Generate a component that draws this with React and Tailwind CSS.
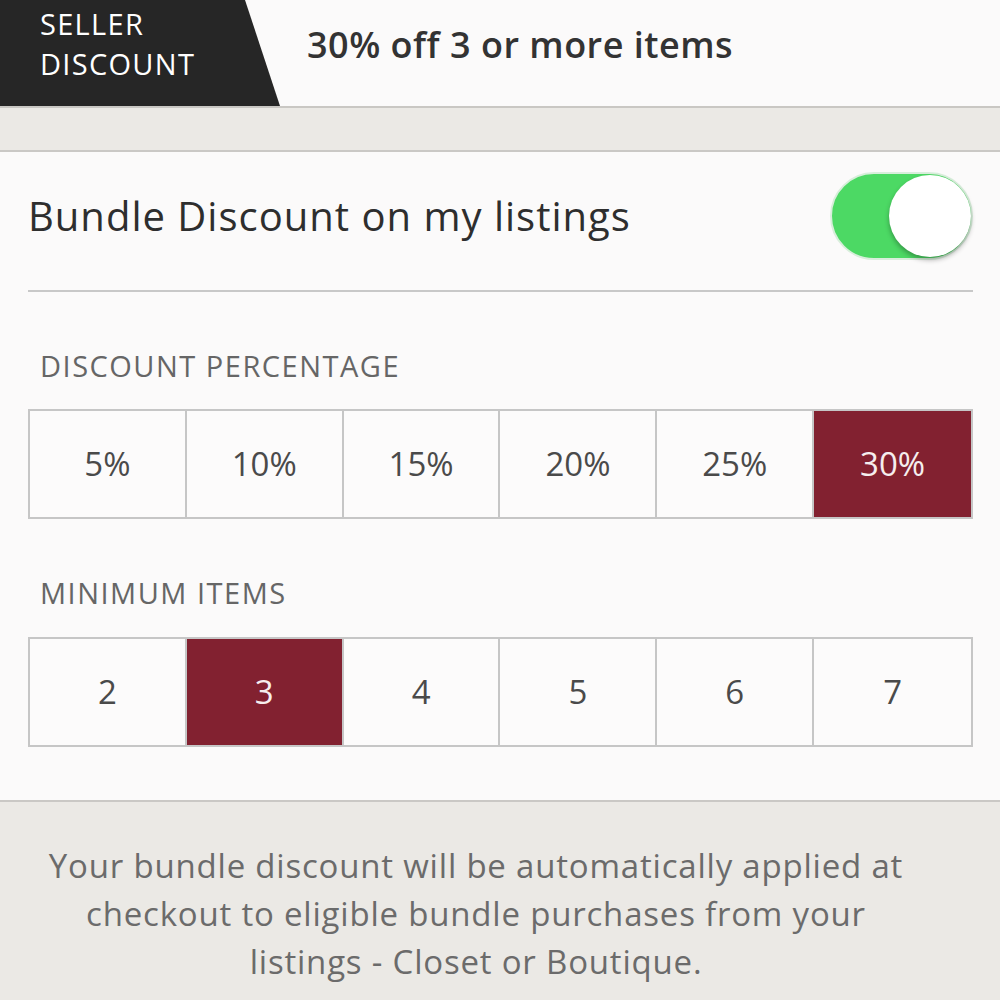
import { useState } from "react";

const percents = [5, 10, 15, 20, 25, 30];
const minItems = [2, 3, 4, 5, 6, 7];

function Toggle({ on, onChange }) {
  return (
    <button
      onClick={() => onChange(!on)}
      className={`w-[143px] h-[88px] rounded-full flex items-center p-0 border-2 transition-all ${
        on
          ? "bg-[#4cd964] border-[#d8eedb] justify-end"
          : "bg-[#e6e6e6] border-[#dcdcdc] justify-start"
      }`}
    >
      <span className="w-[82px] h-[82px] rounded-full bg-white shadow-[0_3px_5px_rgba(0,0,0,0.3)]" />
    </button>
  );
}

function Picker({ options, value, onPick, suffix = "" }) {
  return (
    <div className="grid grid-cols-6 border-2 border-[#c6c6c6] bg-[#fcfbfb]">
      {options.map((opt, i) => (
        <button
          key={opt}
          onClick={() => onPick(opt)}
          className={`h-[106px] flex items-center justify-center text-[33px] ${
            i < options.length - 1 ? "border-r-2 border-[#c6c6c6]" : ""
          } ${
            value === opt
              ? "bg-[#822130] text-[#f6eeee]"
              : "text-[#4a4a4a]"
          }`}
        >
          {opt}
          {suffix}
        </button>
      ))}
    </div>
  );
}

export default function App() {
  const [enabled, setEnabled] = useState(true);
  const [percent, setPercent] = useState(30);
  const [items, setItems] = useState(3);

  return (
    <div
      className="w-[1000px] h-[1000px] overflow-hidden bg-[#ebe9e5]"
      style={{ fontFamily: "'Open Sans', Lato, sans-serif" }}
    >
      {/* HEADER */}
      <div className="h-[108px] bg-[#fbfafa] border-b-2 border-[#c9c7c3] flex items-center">
        <div className="w-[280px] h-full bg-[#262626] [clip-path:polygon(0_0,245px_0,280px_100%,0_100%)] flex flex-col pt-[4px] pl-[40px] text-white text-[29px] leading-[40px] tracking-[1.3px]">
          <span>SELLER</span>
          <span>DISCOUNT</span>
        </div>
        <p className="ml-[27px] -mt-[16px] text-[36px] tracking-[0.5px] font-semibold text-[#333]">
          {enabled ? `${percent}% off ${items} or more items` : "No bundle discount"}
        </p>
      </div>

      <div className="h-[42px]" />

      {/* SETTINGS */}
      <div className="bg-[#fbfafa] border-t-2 border-b-2 border-[#cac8c5] pl-[28px] pr-[27px] pt-[20px] pb-[53px]">
        <div className="flex items-center justify-between">
          <h2 className="text-[40px] tracking-[1px] text-[#2e2e2e]">
            Bundle Discount on my listings
          </h2>
          <Toggle on={enabled} onChange={setEnabled} />
        </div>

        <div className="mt-[30px] h-[2px] bg-[#c8c8c8]" />

        <p className="mt-[58px] ml-[12px] text-[29px] leading-[32px] tracking-[1.5px] text-[#666]">
          DISCOUNT PERCENTAGE
        </p>
        <div className="mt-[27px]">
          <Picker
            options={percents}
            value={percent}
            onPick={setPercent}
            suffix="%"
          />
        </div>

        <p className="mt-[58px] ml-[12px] text-[29px] leading-[32px] tracking-[1.5px] text-[#666]">
          MINIMUM ITEMS
        </p>
        <div className="mt-[28px]">
          <Picker options={minItems} value={items} onPick={setItems} />
        </div>
      </div>

      {/* NOTE */}
      <p className="pt-[40px] pl-[40px] pr-[88px] text-center text-[33px] leading-[48px] tracking-[0.8px] text-[#6b6b6b]">
        Your bundle discount will be automatically applied at checkout to
        eligible bundle purchases from your listings - Closet or Boutique.
      </p>
    </div>
  );
}
